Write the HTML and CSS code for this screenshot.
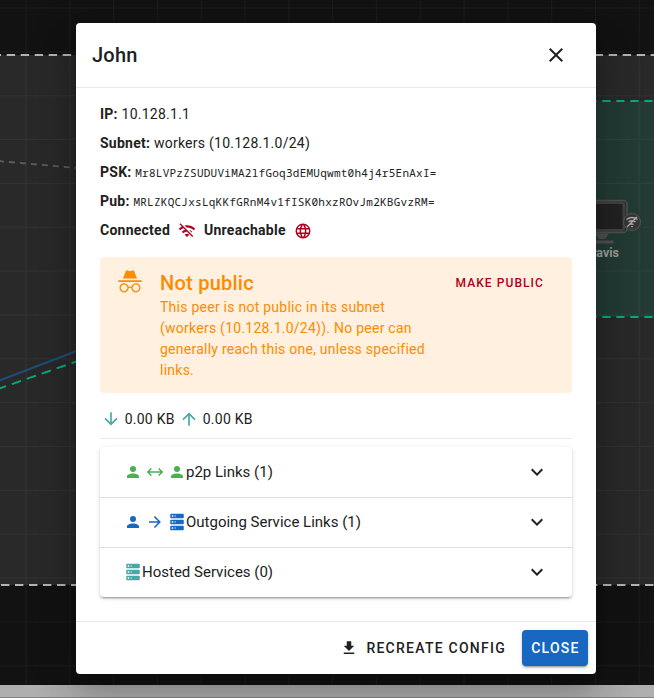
FILE: index.html
```html
<!DOCTYPE html>
<html lang="en">
<head>
<meta charset="utf-8">
<title>Peer</title>
<link rel="stylesheet" href="styles.css">
</head>
<body>
<svg class="canvas" width="654" height="698" viewBox="0 0 654 698">
  <defs>
    <pattern id="grid" width="43.8" height="43.85" x="25.5" y="7.5" patternUnits="userSpaceOnUse">
      <path d="M0.5 0V43.85M0 0.5H43.8" stroke="#fff" stroke-opacity=".045" stroke-width="1"/>
    </pattern>
  </defs>
  <rect width="654" height="698" fill="#121212"/>
  <rect y="55" width="654" height="530" fill="#292929"/>
  <rect x="400" y="101" width="254" height="216" fill="#233b34"/>
  <rect width="654" height="698" fill="url(#grid)"/>
  <path d="M-7.3 55H660" stroke="#b4b4b4" stroke-width="2" stroke-dasharray="8.4 5.6"/>
  <path d="M-13 585H660" stroke="#b4b4b4" stroke-width="2" stroke-dasharray="8.4 5.6"/>
  <path d="M392.3 101H660M392.3 317H660" stroke="#00ac7d" stroke-width="2" stroke-dasharray="8.2 5.8"/>
  <path d="M-2 161L76 168" stroke="#5c5c5c" stroke-width="1.8" stroke-dasharray="6 5"/>
  <path d="M0 380.3L76 351.3" stroke="#1f4e7c" stroke-width="2"/>
  <path d="M-3 389.3L76 361.6" stroke="#00ac7d" stroke-width="2" stroke-dasharray="9.6 6.2"/>
  <rect x="560" y="200.5" width="67" height="32" rx="4" fill="#222" stroke="#505050" stroke-width="1.6"/>
  <rect x="560" y="202.5" width="64" height="28" rx="2.5" fill="#222" stroke="#414141" stroke-width="3"/>
  <path d="M595 233.500H609L605 239H599ZM590 240.500H613.500V243.500H590Z" fill="#505050"/>
  <circle cx="632" cy="222" r="8.5" fill="#373737" stroke="#555" stroke-width="1"/>
  <path d="M626.500 219.500Q632 215.500 637.500 219.500M628.500 222Q632 219.500 635.500 222M630.500 224.500Q632 223.500 633.500 224.500M627 227L637 217M631.200 226.700H632.800" fill="none" stroke="#aaa" stroke-width="1.3"/>
  <text class="node-name" x="619" y="257" text-anchor="end">Travis</text>
  <rect y="685" width="654" height="12" fill="#afafaf"/>
  <rect y="697" width="654" height="1" fill="#858585"/>
</svg>

<main class="dialog">
  <header class="dialog-head">
    <h1>John</h1>
    <svg class="i24" viewBox="0 0 24 24"><path d="M19,6.41L17.59,5L12,10.59L6.41,5L5,6.41L10.59,12L5,17.59L6.41,19L12,13.41L17.59,19L19,17.59L13.41,12L19,6.41Z"/></svg>
  </header>
  <section class="body">
    <div class="facts">
      <div><b>IP:</b> 10.128.1.1</div>
      <div><b>Subnet:</b> workers (10.128.1.0/24)</div>
      <div><b>PSK:</b> <code>Mr8LVPzZSUDUViMA2lfGoq3dEMUqwmt0h4j4r5EnAxI=</code></div>
      <div><b>Pub:</b> <code>MRLZKQCJxsLqKKfGRnM4v1fISK0hxzROvJm2KBGvzRM=</code></div>
      <div class="status">
        <b>Connected</b>
        <svg class="i18 red" viewBox="0 0 24 24"><path d="M22.99 9C19.15 5.16 13.8 3.76 8.84 4.78l2.52 2.52c3.47-.17 6.99 1.05 9.63 3.7l2-2zm-4 4c-1.29-1.29-2.84-2.13-4.49-2.56l3.53 3.53.96-.97zM2 3.05L5.07 6.1C3.6 6.82 2.22 7.78 1 9l1.99 2c1.24-1.24 2.67-2.16 4.2-2.77l2.24 2.24C7.81 10.89 6.27 11.73 5 13v.01L6.990 15c1.360-1.360 3.140-2.040 4.920-2.060L18.980 20l1.270-1.260L3.290 1.790 2 3.050zM9 17l3 3 3-3c-1.650-1.660-4.340-1.660-6 0z"/></svg>
        <b>Unreachable</b>
        <svg class="i18 red" viewBox="0 0 24 24"><path d="M16.36,14C16.44,13.34 16.5,12.68 16.5,12C16.5,11.32 16.44,10.66 16.36,10H19.74C19.9,10.64 20,11.31 20,12C20,12.69 19.9,13.36 19.74,14M14.59,19.56C15.19,18.45 15.65,17.25 15.97,16H18.92C17.96,17.65 16.43,18.93 14.59,19.56M14.34,14H9.66C9.56,13.34 9.5,12.68 9.5,12C9.5,11.32 9.56,10.65 9.66,10H14.34C14.43,10.65 14.5,11.32 14.5,12C14.5,12.68 14.43,13.34 14.34,14M12,19.96C11.17,18.76 10.5,17.43 10.09,16H13.91C13.5,17.43 12.83,18.76 12,19.96M8,8H5.08C6.03,6.34 7.57,5.06 9.4,4.44C8.8,5.55 8.35,6.75 8,8M5.08,16H8C8.35,17.25 8.8,18.45 9.4,19.56C7.57,18.93 6.03,17.65 5.08,16M4.26,14C4.1,13.36 4,12.69 4,12C4,11.31 4.1,10.64 4.26,10H7.64C7.56,10.66 7.5,11.32 7.5,12C7.5,12.68 7.56,13.34 7.64,14M12,4.03C12.83,5.23 13.5,6.57 13.91,8H10.09C10.5,6.57 11.17,5.23 12,4.03M18.92,8H15.97C15.65,6.75 15.19,5.55 14.59,4.44C16.43,5.07 17.96,6.34 18.92,8M12,2A10,10 0 1,0 22,12A10,10 0 0,0 12,2Z"/></svg>
      </div>
    </div>
    <div class="alert">
      <svg class="i28" viewBox="0 0 24 24"><path d="M17.06,13C15.2,13 13.64,14.33 13.24,16.1C12.29,15.69 11.42,15.8 10.76,16.09C10.35,14.31 8.79,13 6.94,13C4.77,13 3,14.79 3,17C3,19.21 4.77,21 6.94,21C9,21 10.68,19.38 10.84,17.32C11.18,17.08 12.07,16.63 13.16,17.34C13.34,19.39 15,21 17.06,21C19.23,21 21,19.21 21,17C21,14.79 19.23,13 17.06,13M6.94,19.86C5.38,19.86 4.13,18.58 4.13,17C4.13,15.42 5.39,14.14 6.94,14.14C8.5,14.14 9.75,15.42 9.75,17C9.75,18.58 8.5,19.86 6.94,19.86M17.06,19.86C15.5,19.86 14.25,18.58 14.25,17C14.25,15.42 15.5,14.14 17.06,14.14C18.62,14.14 19.88,15.42 19.88,17C19.88,18.58 18.61,19.86 17.06,19.86M22,10.5H2V12H22V10.5M15.53,2.63C15.31,2.14 14.75,1.88 14.22,2.05L12,2.79L9.77,2.05L9.71,2.04C9.19,1.89 8.64,2.17 8.44,2.68L6,9H18L15.56,2.68L15.53,2.63Z"/></svg>
      <div class="alert-text">
        <h2>Not public</h2>
        <p>This peer is not public in its subnet (workers (10.128.1.0/24)). No peer can generally reach this one, unless specified links.</p>
      </div>
      <button class="make-public">Make public</button>
    </div>
    <div class="traffic">
      <svg class="i20 teal" viewBox="0 0 24 24"><path d="M11,4H13V16L18.5,10.5L19.92,11.92L12,19.84L4.08,11.92L5.5,10.5L11,16V4Z"/></svg>
      <span>0.00 KB</span>
      <svg class="i20 teal" viewBox="0 0 24 24"><path d="M13,20H11V8L5.5,13.5L4.08,12.08L12,4.16L19.92,12.08L18.5,13.5L13,8V20Z"/></svg>
      <span>0.00 KB</span>
    </div>
    <div class="panels">
      <div class="panel">
        <span class="glyphs green">
          <svg class="i18" viewBox="0 0 24 24"><path d="M12,4A4,4 0 0,1 16,8A4,4 0 0,1 12,12A4,4 0 0,1 8,8A4,4 0 0,1 12,4M12,14C16.42,14 20,15.79 20,18V20H4V18C4,15.79 7.58,14 12,14Z"/></svg>
          <svg class="i18" viewBox="0 0 24 24"><path d="M6.45,17.45L1,12L6.45,6.55L7.86,7.96L4.83,11H19.17L16.14,7.96L17.55,6.55L23,12L17.55,17.45L16.14,16.04L19.17,13H4.83L7.86,16.04L6.45,17.45Z"/></svg>
          <svg class="i18" viewBox="0 0 24 24"><path d="M12,4A4,4 0 0,1 16,8A4,4 0 0,1 12,12A4,4 0 0,1 8,8A4,4 0 0,1 12,4M12,14C16.42,14 20,15.79 20,18V20H4V18C4,15.79 7.58,14 12,14Z"/></svg>
        </span>
        <span class="name">p2p Links (1)</span>
        <svg class="i24" viewBox="0 0 24 24"><path d="M7.41,8.58L12,13.17L16.59,8.58L18,10L12,16L6,10L7.41,8.58Z"/></svg>
      </div>
      <div class="panel">
        <span class="glyphs blue">
          <svg class="i18" viewBox="0 0 24 24"><path d="M12,4A4,4 0 0,1 16,8A4,4 0 0,1 12,12A4,4 0 0,1 8,8A4,4 0 0,1 12,4M12,14C16.42,14 20,15.79 20,18V20H4V18C4,15.79 7.58,14 12,14Z"/></svg>
          <svg class="i18" viewBox="0 0 24 24"><path d="M4,11V13H16L10.5,18.5L11.92,19.92L19.84,12L11.92,4.08L10.5,5.5L16,11H4Z"/></svg>
          <svg class="i18" viewBox="0 0 24 24"><path d="M4,1H20A1,1 0 0,1 21,2V6A1,1 0 0,1 20,7H4A1,1 0 0,1 3,6V2A1,1 0 0,1 4,1M4,9H20A1,1 0 0,1 21,10V14A1,1 0 0,1 20,15H4A1,1 0 0,1 3,14V10A1,1 0 0,1 4,9M4,17H20A1,1 0 0,1 21,18V22A1,1 0 0,1 20,23H4A1,1 0 0,1 3,22V18A1,1 0 0,1 4,17M9,5H10V3H9V5M9,13H10V11H9V13M9,21H10V19H9V21M5,3V5H7V3H5M5,11V13H7V11H5M5,19V21H7V19H5Z"/></svg>
        </span>
        <span class="name">Outgoing Service Links (1)</span>
        <svg class="i24" viewBox="0 0 24 24"><path d="M7.41,8.58L12,13.17L16.59,8.58L18,10L12,16L6,10L7.41,8.58Z"/></svg>
      </div>
      <div class="panel">
        <span class="glyphs teal">
          <svg class="i18" viewBox="0 0 24 24"><path d="M4,1H20A1,1 0 0,1 21,2V6A1,1 0 0,1 20,7H4A1,1 0 0,1 3,6V2A1,1 0 0,1 4,1M4,9H20A1,1 0 0,1 21,10V14A1,1 0 0,1 20,15H4A1,1 0 0,1 3,14V10A1,1 0 0,1 4,9M4,17H20A1,1 0 0,1 21,18V22A1,1 0 0,1 20,23H4A1,1 0 0,1 3,22V18A1,1 0 0,1 4,17M9,5H10V3H9V5M9,13H10V11H9V13M9,21H10V19H9V21M5,3V5H7V3H5M5,11V13H7V11H5M5,19V21H7V19H5Z"/></svg>
        </span>
        <span class="name">Hosted Services (0)</span>
        <svg class="i24" viewBox="0 0 24 24"><path d="M7.41,8.58L12,13.17L16.59,8.58L18,10L12,16L6,10L7.41,8.58Z"/></svg>
      </div>
    </div>
  </section>
  <footer class="actions">
    <button class="recreate"><svg class="i18" viewBox="0 0 24 24"><path d="M5,20H19V18H5M19,9H15V3H9V9H5L12,16L19,9Z"/></svg>Recreate config</button>
    <button class="close">Close</button>
  </footer>
</main>
</body>
</html>
```
FILE: styles.css
```css
* { box-sizing: border-box; }
body {
  margin: 0;
  width: 654px;
  height: 698px;
  padding: 23px 58px 24px 76px;
  overflow: hidden;
  background: #121212;
  color: #212121;
  font-family: Roboto, sans-serif;
  font-size: 14px;
}
h1, h2, p { margin: 0; }
button { border: 0; background: none; padding: 0; font: inherit; color: inherit; text-transform: uppercase; white-space: nowrap; }
svg { display: block; flex: none; fill: currentColor; }
.canvas { position: absolute; left: 0; top: 0; }
.node-name { font-size: 12.5px; font-weight: 700; fill: #9a9f9d; }
.i18 { width: 18px; height: 18px; }
.i20 { width: 20px; height: 20px; }
.i24 { width: 24px; height: 24px; }
.i28 { width: 28px; height: 28px; }
.red { color: #b00020; }
.teal { color: #47a9a6; }
.green { color: #4caf50; }
.blue { color: #1867c0; }

.dialog {
  position: relative;
  display: flex;
  flex-direction: column;
  width: 520px;
  height: 651px;
  background: #fff;
  border-radius: 4px;
  box-shadow: 0 11px 15px -7px rgba(0,0,0,.2), 0 24px 38px 3px rgba(0,0,0,.14), 0 9px 46px 8px rgba(0,0,0,.12);
}
.dialog-head {
  display: flex;
  align-items: center;
  justify-content: space-between;
  height: 65px;
  padding: 0 28px 0 16px;
  border-bottom: 1px solid #e9e9e9;
}
h1 { font-size: 20px; font-weight: 500; letter-spacing: .25px; }
.body { flex: 1; padding: 12px 24px 0; }
.facts { letter-spacing: .25px; }
.facts > div { height: 29px; line-height: 29px; white-space: nowrap; }
b { font-weight: 700; }
code { font-family: "Noto Sans Mono", "DejaVu Sans Mono", monospace; font-size: 11px; }
.status { display: flex; align-items: center; gap: 8px; }
.alert {
  display: flex;
  height: 136px;
  margin-top: 12px;
  padding: 11px 16px;
  border-radius: 4px;
  background: #fff0e0;
  color: #fb8c00;
}
.alert-text { width: 275px; margin: 0 20.5px 0 16px; }
h2 { font-size: 20px; line-height: 30px; font-weight: 500; letter-spacing: .25px; }
p { font-size: 14px; line-height: 21px; letter-spacing: .25px; margin-top: -1px; }
.make-public { height: 28px; margin-top: 1px; font-size: 12px; font-weight: 500; letter-spacing: 1.070px; color: #b00020; }
.traffic {
  display: flex;
  align-items: center;
  height: 46px;
  padding: 6px 0 0 .7px;
  gap: 4px;
  letter-spacing: .25px;
  border-bottom: 1px solid #ececec;
}
.panels {
  margin-top: 8px;
  border-radius: 4px;
  box-shadow: 0 3px 1px -2px rgba(0,0,0,.2), 0 2px 2px 0 rgba(0,0,0,.14), 0 1px 5px 0 rgba(0,0,0,.12);
}
.panel { display: flex; align-items: center; height: 50px; padding: 0 23.5px 0 24px; font-size: 15px; }
.panel + .panel { border-top: 1px solid #dfdfdf; padding-bottom: 1px; }
.glyphs { display: flex; gap: 4px; }
.name { flex: 1; }
.actions {
  display: flex;
  align-items: center;
  justify-content: flex-end;
  height: 53px;
  padding: 0 8px;
  gap: 16px;
  border-top: 1px solid #e9e9e9;
  font-size: 14px;
  font-weight: 500;
  letter-spacing: 1.250px;
}
.recreate { display: flex; align-items: center; gap: 8.700px; letter-spacing: inherit; }
.close {
  width: 66px;
  height: 36px;
  padding-left: 1px;
  border-radius: 4px;
  background: #1867c0;
  color: #fff;
  letter-spacing: inherit;
  box-shadow: 0 3px 1px -2px rgba(0,0,0,.2), 0 2px 2px 0 rgba(0,0,0,.14), 0 1px 5px 0 rgba(0,0,0,.12);
}
```
